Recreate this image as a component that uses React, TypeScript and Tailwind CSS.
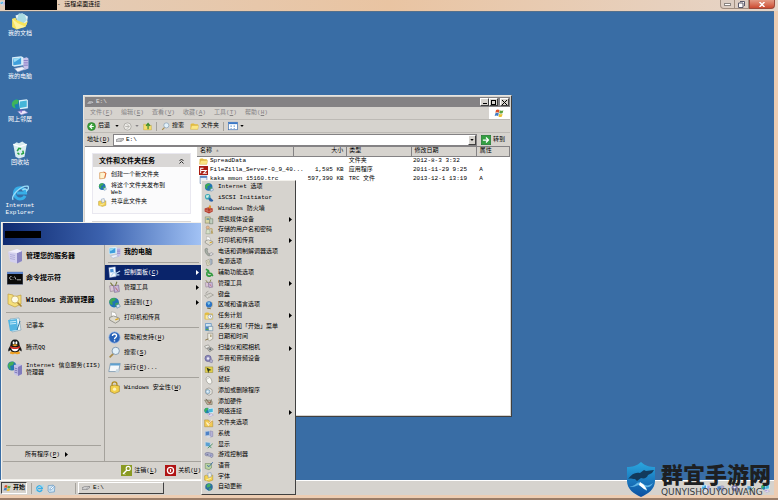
import React from 'react';

type IconProps = { className?: string };

const Svg = ({ className = 'size-[10px]', children }: { className?: string; children: React.ReactNode }) => (
  <svg viewBox="0 0 16 16" className={`shrink-0 ${className}`} aria-hidden="true">
    {children}
  </svg>
);

const DocsIcon = ({ className }: IconProps) => (
  <Svg className={className}>
    <path d="M4 3l6-2 5 3-1 7-7 2z" fill="#e6f3f6" />
    <path d="M7 1l5 1 2 5-4 4-5-3z" fill="#a9dbe2" />
    <path d="M1 6l3-1 1 2 7 3 3-2-2 5-8 2.500-4-2z" fill="#f6e45c" />
    <path d="M1 6l4 9 8-2-7-3z" fill="#fbf2a0" />
  </Svg>
);

const ComputerIcon = ({ className }: IconProps) => (
  <Svg className={className}>
    <path d="M10 3l4-1 1.500 1v9l-4 1.500z" fill="#c9c2ea" />
    <path d="M11 5h4M11 7h4M11 9h4" stroke="#7c72bd" strokeWidth=".8" />
    <path d="M1 2l8-1 2 1v7l-8 1.500-2-1z" fill="#d7edf9" />
    <path d="M2 3.200l7-.8v5.800l-7 1z" fill="#3f9fdc" />
    <path d="M2 3.200l7-.8-6 4z" fill="#9adcf5" />
    <path d="M3 12l7-1.500 3 2-7 2.500z" fill="#eef2fa" stroke="#8b9cc6" strokeWidth=".5" />
  </Svg>
);

const NetPlacesIcon = ({ className }: IconProps) => (
  <Svg className={className}>
    <circle cx="5" cy="5.500" r="4.500" fill="#1c7fb4" />
    <path d="M1 4c2-3 4-3 6-2L6 5 3 6l1 3c-2 0-4-2-3-5z" fill="#3fb45a" />
    <path d="M7 2l7-1 1 1v7l-7 1z" fill="#d9f1fb" />
    <path d="M8 3l6-.8v5.600l-6 1z" fill="#45b5d8" />
    <path d="M6 12l6-1 3 2-6 2z" fill="#eee8fa" stroke="#7c78c8" strokeWidth=".5" />
    <path d="M9 10v3" stroke="#7e58c0" />
  </Svg>
);

const RecycleIcon = ({ className }: IconProps) => (
  <Svg className={className}>
    <path d="M2 3l3-2 2 1 3-1.500 4 2.500-2 11-5 1.500-3-1.500z" fill="#d9ecf0" />
    <path d="M2 3l6 2 6-2" stroke="#ffffff" strokeWidth="1.200" fill="none" />
    <path d="M5.500 9l1.500-2.500 2 .5M10.500 8.500l.5 2.500-2 .8M7.500 12L5.800 10.500" stroke="#27a243" strokeWidth="1.400" fill="none" />
  </Svg>
);

const IeIcon = ({ className }: IconProps) => (
  <Svg className={className}>
    <path d="M12.500 10.500A5 5 0 1 1 13 8H5" fill="none" stroke="#37aee8" strokeWidth="2.600" />
    <path d="M2 14C-1 11 9 1 15 2c1 1 0 3-1 4 0-2-2-2-4-.5" fill="none" stroke="#9bdcf8" strokeWidth="1.200" />
  </Svg>
);

const GlobeIcon = ({ className }: IconProps) => (
  <Svg className={className}>
    <circle cx="7.500" cy="8" r="6" fill="#2174b4" />
    <path d="M3 4c2-2 5-2 7-1L8 6 5 7l1 3-2 1C1 9 1 6 3 4zM9 9l4-1c0 3-2 5-4 5z" fill="#3fa955" />
    <path d="M10 11l4-1 1 3-4 2z" fill="#d5e6f5" stroke="#3c6e9c" strokeWidth=".6" />
  </Svg>
);

const IscsiIcon = ({ className }: IconProps) => (
  <Svg className={className}>
    <circle cx="6" cy="6" r="4.500" fill="#3ca7b6" />
    <path d="M3 4l5-1-1 4-3 1z" fill="#d7f1e5" />
    <path d="M7 9l3-2 5 5-2 2-4-1z" fill="#2a62a8" />
  </Svg>
);

const FirewallIcon = ({ className }: IconProps) => (
  <Svg className={className}>
    <path d="M1 7l6-2 7 2v5l-6 3-7-3z" fill="#b3392b" />
    <path d="M1 9.500l7 2.500 6-2.500M5 6v7M11 7v6" stroke="#e8a08c" strokeWidth=".7" fill="none" />
    <path d="M8 7c-2-3 1-3 1-6 3 2 3 4 1 6z" fill="#e2922c" />
  </Svg>
);

const ToolsIcon = ({ className }: IconProps) => (
  <Svg className={className}>
    <path d="M2 6l5-1 1 7-5 1z" fill="#d9c4d6" stroke="#77667a" strokeWidth=".6" />
    <path d="M7 6l6-1 1 8-6 1z" fill="#c8b5d8" stroke="#5d4a78" strokeWidth=".6" />
    <path d="M3 2l3 4M11 1L9 6" stroke="#7a7a40" strokeWidth="1.300" />
    <path d="M9 8l3 4" stroke="#b35a52" />
  </Svg>
);

const DevicesIcon = ({ className }: IconProps) => (
  <Svg className={className}>
    <path d="M2 3h8v10H2z" fill="#d8d6a4" stroke="#747450" strokeWidth=".8" />
    <path d="M4 5h4v3H4z" fill="#6e9a9d" />
    <path d="M9 6h5v8H9z" fill="#c1cfc0" stroke="#62705f" strokeWidth=".8" />
  </Svg>
);

const UsersIcon = ({ className }: IconProps) => (
  <Svg className={className}>
    <circle cx="6" cy="4" r="2.500" fill="#e7b98f" stroke="#8a623f" strokeWidth=".5" />
    <path d="M3 14l1-7h5l1 7z" fill="#d6e0c9" stroke="#6f7e62" strokeWidth=".6" />
    <path d="M9 6h4v3l1 5M12 9v5" stroke="#a88a31" fill="none" />
  </Svg>
);

const PrinterIcon = ({ className }: IconProps) => (
  <Svg className={className}>
    <path d="M4 1l5 1 2 5-6 1z" fill="#fff" stroke="#93938a" strokeWidth=".6" />
    <path d="M2 8l5-2 7 3v3l-5 3-7-4z" fill="#dedbd0" stroke="#66665e" strokeWidth=".7" />
    <path d="M9 11l4-1.500" stroke="#d9a520" strokeWidth="1.600" />
  </Svg>
);

const PhoneIcon = ({ className }: IconProps) => (
  <Svg className={className}>
    <path d="M2 3c3-2 5 0 3 3l2 5c4 0 4 2 2 3-4 1-9-7-7-11z" fill="#aab0a8" stroke="#5e645e" strokeWidth=".7" />
    <path d="M8 11l4-2 3 2-4 3z" fill="#dddde0" stroke="#70707a" strokeWidth=".7" />
  </Svg>
);

const PowerPlanIcon = ({ className }: IconProps) => (
  <Svg className={className}>
    <path d="M3 6l5-2 2 8-5 2z" fill="#e6e4c8" stroke="#7c7a62" strokeWidth=".7" />
    <path d="M9 3l4 1v7l-3 2" fill="#aab6c3" stroke="#56616e" strokeWidth=".6" />
    <path d="M5 8l2-.6M6 10l2-.6" stroke="#7a7a7a" />
  </Svg>
);

const AccessIcon = ({ className }: IconProps) => (
  <Svg className={className}>
    <path d="M3 2l4 2 1 4 4 1 2 4M7 5C3 7 4 13 8 13c2 0 3-1 3-2" stroke="#2f9a3e" strokeWidth="2.600" fill="none" />
  </Svg>
);

const KeyboardIcon = ({ className }: IconProps) => (
  <Svg className={className}>
    <path d="M1 9l9-4 5 3-9 5z" fill="#e8e6de" stroke="#66665e" strokeWidth=".7" />
    <path d="M4 9.500l7-3M6 11l7-3.500" stroke="#8d8d86" strokeDasharray="1 .8" />
    <path d="M3 6c0-3 3-3 4-4" stroke="#707068" fill="none" strokeWidth=".8" />
  </Svg>
);

const RegionIcon = ({ className }: IconProps) => (
  <Svg className={className}>
    <circle cx="8" cy="7" r="5" fill="#2c74c4" />
    <path d="M5 4l4-1 1 3-3 2z" fill="#81c6ea" />
    <path d="M5 13l6 1" stroke="#6d6242" strokeWidth="1.500" />
    <path d="M12 3c3 3 2 8-2 10" fill="none" stroke="#a09060" strokeWidth=".8" />
  </Svg>
);

const FolderIcon = ({ className }: IconProps) => (
  <Svg className={className}>
    <path d="M1 4l2-1.500h4L8.500 4H14v9H1z" fill="#e3bc3f" />
    <path d="M1 13l2-7h12.500L14 13z" fill="#fbe683" stroke="#c59a2b" strokeWidth=".5" />
  </Svg>
);

const FolderClockIcon = ({ className }: IconProps) => (
  <Svg className={className}>
    <path d="M1 4l2-1.500h4L8.500 4H14v9H1z" fill="#e3bc3f" />
    <path d="M2 6h12v7H2z" fill="#fbeaa0" stroke="#c59a2b" strokeWidth=".5" />
    <circle cx="10" cy="9" r="3.600" fill="#fff" stroke="#6b84b2" strokeWidth=".8" />
    <path d="M10 7v2l1.500 1" stroke="#333" strokeWidth=".8" fill="none" />
  </Svg>
);

const TaskbarIcon = ({ className }: IconProps) => (
  <Svg className={className}>
    <path d="M2 2h10v12H2z" fill="#4c88c2" />
    <path d="M3 3h8v4H3z" fill="#cfe4f3" />
    <path d="M7 7h7v7H7z" fill="#e9efe9" stroke="#3c648c" strokeWidth=".7" />
    <path d="M3 11h4v2H3z" fill="#53a94a" />
  </Svg>
);

const ClockIcon = ({ className }: IconProps) => (
  <Svg className={className}>
    <path d="M6 2h8v9l-5 3-3-2z" fill="#eeece2" stroke="#7a776a" strokeWidth=".8" />
    <path d="M2 13l5-2M11 4v4" stroke="#8b7443" strokeWidth="1.500" />
  </Svg>
);

const CameraIcon = ({ className }: IconProps) => (
  <Svg className={className}>
    <path d="M1 5l6-2 2 3-6 3z" fill="#e9e9e6" stroke="#66665e" strokeWidth=".7" />
    <path d="M5 9l6-2 4 3-6 4z" fill="#bfc0bc" stroke="#565650" strokeWidth=".7" />
    <circle cx="10" cy="10" r="1.700" fill="#52616b" />
  </Svg>
);

const SoundIcon = ({ className }: IconProps) => (
  <Svg className={className}>
    <circle cx="6.500" cy="7" r="5" fill="#8e8bbb" stroke="#4b4880" strokeWidth=".8" />
    <circle cx="6.500" cy="7" r="2" fill="#ecebf6" />
    <path d="M10 8l4 2-1 4-4-1z" fill="#b5b3d0" stroke="#57547f" strokeWidth=".6" />
  </Svg>
);

const LicenseIcon = ({ className }: IconProps) => (
  <Svg className={className}>
    <path d="M2 3h12v9H2z" fill="#e3d04b" stroke="#7b6d1c" strokeWidth=".6" />
    <path d="M4 4l8 4-4 1-1 4z" fill="#2d3a1e" />
  </Svg>
);

const MouseIcon = ({ className }: IconProps) => (
  <Svg className={className}>
    <path d="M4 4c3-3 6-1 8 4s-1 7-4 6S2 7 4 4z" fill="#fafaf6" stroke="#77776e" strokeWidth=".8" />
    <path d="M4 7l5-3" stroke="#99998e" strokeWidth=".8" />
  </Svg>
);

const AddRemoveIcon = ({ className }: IconProps) => (
  <Svg className={className}>
    <path d="M3 5l5-2 5 3v6l-5 3-5-3z" fill="#e8e6e0" stroke="#74716a" strokeWidth=".8" />
    <circle cx="6" cy="9" r="3.500" fill="#bcd8ea" stroke="#4d7896" strokeWidth=".7" />
    <circle cx="6" cy="9" r="1" fill="#fff" />
  </Svg>
);

const HardwareIcon = ({ className }: IconProps) => (
  <Svg className={className}>
    <path d="M1 5h9l3 2v5H5z" fill="#b9b49e" stroke="#5a573f" strokeWidth=".7" />
    <path d="M3 3l4 5M12 4l-3 7" stroke="#6a5741" strokeWidth="1.200" />
    <path d="M6 9h5" stroke="#a04538" />
  </Svg>
);

const FolderOptIcon = ({ className }: IconProps) => (
  <Svg className={className}>
    <path d="M1 3h6l1 2h6v9H1z" fill="#f2ca55" stroke="#a8811f" strokeWidth=".7" />
    <path d="M4 7l3 4 6-8" stroke="#fff8cf" strokeWidth="2" fill="none" />
    <path d="M8 10l5-6" stroke="#c96f29" />
  </Svg>
);

const SystemIcon = ({ className }: IconProps) => (
  <Svg className={className}>
    <path d="M2 4l7-1v7l-7 1z" fill="#4f82c5" stroke="#c4d5ea" />
    <path d="M10 3l4 1v8l-4 1z" fill="#b5b2d8" stroke="#6c689c" strokeWidth=".6" />
    <path d="M4 12l6-1 1 2-6 1z" fill="#d5dbe8" />
  </Svg>
);

const DisplayIcon = ({ className }: IconProps) => (
  <Svg className={className}>
    <path d="M2 3l8 1v7l-8-1z" fill="#5aa0d2" stroke="#d1e0ea" />
    <path d="M6 13L14 6M8 9l4 4" stroke="#3c8b58" strokeWidth="1.300" />
  </Svg>
);

const GameIcon = ({ className }: IconProps) => (
  <Svg className={className}>
    <path d="M2 5c3-2 9 0 12 1 1 3 0 6-2 6l-3-2-4-1c-2 1-4-1-3-4z" fill="#b3b5cf" stroke="#565a85" strokeWidth=".8" />
    <circle cx="11" cy="8" r="1" fill="#5159a8" />
    <path d="M4 7h3" stroke="#474c75" />
  </Svg>
);

const SpeechIcon = ({ className }: IconProps) => (
  <Svg className={className}>
    <path d="M2 4h10v7l-4 3-6-2z" fill="#b9d3a2" stroke="#567447" strokeWidth=".7" />
    <path d="M14 2L8 9 5 7" stroke="#3f6ea8" strokeWidth="1.600" fill="none" />
  </Svg>
);

const FontsIcon = ({ className }: IconProps) => (
  <Svg className={className}>
    <path d="M1 6l3-1 2 1 8-1v8l-6 2-7-2z" fill="#f3d251" stroke="#a4861f" strokeWidth=".7" />
    <path d="M6 2l5-1 1 6-5 2z" fill="#f3f1e2" stroke="#6c88c0" strokeWidth=".8" />
    <path d="M3 13l8-3" stroke="#fbf0b4" strokeWidth="1.500" />
  </Svg>
);

const UpdateIcon = ({ className }: IconProps) => (
  <Svg className={className}>
    <circle cx="8" cy="8" r="6" fill="#2c6f9f" />
    <path d="M4 5l4-3 3 3-2 3-4 1zM8 10l4 0-3 4z" fill="#48b062" />
    <path d="M3 12l3 2" stroke="#d3e7f0" strokeWidth="1.500" />
  </Svg>
);

const ServerIcon = ({ className }: IconProps) => (
  <Svg className={className}>
    <path d="M1 4l9-3 5 2v10l-5 2.500-7-2z" fill="#d3d0ee" />
    <path d="M10 5l5-2v10l-5 2.500z" fill="#8985c3" />
    <path d="M3 6.500l5 1M3 8.500l5 1M3 10.500l5 1" stroke="#a9a6d6" strokeWidth=".8" />
    <path d="M1 4l9-3 5 2-5 2z" fill="#f1effb" />
  </Svg>
);

const CmdIcon = ({ className }: IconProps) => (
  <Svg className={className}>
    <rect x="0" y="2" width="16" height="12.500" fill="#0a0a0a" stroke="#8a98b4" strokeWidth=".6" />
    <rect x="0" y="2" width="16" height="2" fill="#5b82c8" />
    <path d="M4.500 6.500C2 6 2 10 4.500 9.500M6 7v.5M6 9v.5M7.500 6.500l1.500 3M10 9.800h4" stroke="#d8d8d8" strokeWidth=".8" fill="none" />
  </Svg>
);

const ExplorerIcon = ({ className }: IconProps) => (
  <Svg className={className}>
    <path d="M1 2l5 1 1 2 7-2v9l-6 3-7-3z" fill="#f5df7a" stroke="#b9962f" strokeWidth=".6" />
    <circle cx="8" cy="7.500" r="3.600" fill="#fdfbea" stroke="#cfb669" />
    <path d="M10.500 10.500l4 4" stroke="#a98434" strokeWidth="1.600" />
  </Svg>
);

const NotepadIcon = ({ className }: IconProps) => (
  <Svg className={className}>
    <path d="M3 2l9-1 2 12-9 2z" fill="#e9f7fc" stroke="#5c8ca8" strokeWidth=".5" />
    <path d="M1 3l9-1 1 11-8 1z" fill="#52b5e2" />
    <path d="M3 5l6-.6M3 7l6-.6" stroke="#c7ecfa" />
    <path d="M13 4l-3 9" stroke="#3a7fa6" />
  </Svg>
);

const QqIcon = ({ className }: IconProps) => (
  <Svg className={className}>
    <path d="M3 14c0-2 4-2 5-1 1-1 5-1 5 1 0 1.500-4 1.500-5 .5-1 1-5 1-5-.5z" fill="#f0a020" />
    <path d="M8 .5c3 0 4.500 2 4.500 5 0 2 3 4 2 7l-2-1.500C12 14 4 14 3.500 11l-2 1.500c-1-3 2-5 2-7 0-3 1.500-5 4.500-5z" fill="#171717" />
    <path d="M4.500 8.500h7c1 5-8 5-7 0z" fill="#fff" />
    <path d="M3.500 7c3 2 6 2 9 0l.5 1.500c-3 2-7 2-10 0z" fill="#d8261c" />
    <ellipse cx="6.600" cy="3.800" rx="1" ry="1.500" fill="#fff" />
    <ellipse cx="9.400" cy="3.800" rx="1" ry="1.500" fill="#fff" />
    <path d="M5 6c2-1 4-1 6 0-2 1.500-4 1.500-6 0z" fill="#f0a020" />
  </Svg>
);

const IisIcon = ({ className }: IconProps) => (
  <Svg className={className}>
    <circle cx="5" cy="5" r="4.500" fill="#2678b0" />
    <path d="M1 4c1-3 4-4 6-3L6 4 3 5l1 4C2 8 1 6 1 4z" fill="#45ae57" />
    <path d="M7 4l5-1 3 1v9l-4 2-4-2z" fill="#c5c1e8" />
    <path d="M11 6l4-2v9l-4 2z" fill="#807bbd" />
    <path d="M7.500 7l3 1M7.500 9l3 1M7.500 11l3 1" stroke="#6965a6" strokeWidth=".8" />
  </Svg>
);

const ControlPanelIcon = ({ className }: IconProps) => (
  <Svg className={className}>
    <path d="M1 2l8-1 1 12-8 1z" fill="#f4f8fd" stroke="#88a3cf" strokeWidth=".6" />
    <path d="M2.500 4l4-.5.5 4-4 .5z" fill="#4f94d8" />
    <path d="M4 12l3-4 3 1 5-3M9 11h5" stroke="#b9d9f2" strokeWidth="1.400" fill="none" />
  </Svg>
);

const HelpIcon = ({ className }: IconProps) => (
  <Svg className={className}>
    <circle cx="8" cy="8" r="7" fill="#2762b8" stroke="#a9c2e8" />
    <path d="M5.500 6C5.500 3 10.500 3 10.500 6c0 2-2.500 2-2.500 4M8 11.500v1.500" stroke="#fff" strokeWidth="1.700" fill="none" />
  </Svg>
);

const SearchIcon = ({ className }: IconProps) => (
  <Svg className={className}>
    <path d="M7 9l-5 5" stroke="#a98b4a" strokeWidth="2" />
    <circle cx="9.500" cy="6" r="4.500" fill="#e2f1fa" stroke="#7b93ac" strokeWidth="1.100" />
  </Svg>
);

const RunIcon = ({ className }: IconProps) => (
  <Svg className={className}>
    <path d="M3 3h12l-2 10H1z" fill="#f5f8fa" stroke="#5f83a3" strokeWidth=".8" />
    <path d="M3 3h12l-.5 2.500h-12z" fill="#5fa0cf" />
    <path d="M10 10h4l-1 4H9z" fill="#c7d6df" />
  </Svg>
);

const ShowDesktopIcon = ({ className }: IconProps) => (
  <Svg className={className}>
    <path d="M2 3l9-1 3 3-1 9-9 1-2-3z" fill="#cfe6f5" stroke="#4a86bc" />
    <path d="M5 11l1-3 5-5 2 2-5 5z" fill="#fff" stroke="#3b78b4" strokeWidth=".9" />
  </Svg>
);

const LockIcon = ({ className }: IconProps) => (
  <Svg className={className}>
    <path d="M5 7V4c0-4 6-4 6 0v3" stroke="#b08c22" strokeWidth="1.600" fill="none" />
    <path d="M3 6l5-1 6 1v7l-6 2.500L3 13z" fill="#f2cf4a" stroke="#96761b" strokeWidth=".7" />
    <circle cx="8" cy="10" r="2" fill="#fdf3bd" />
  </Svg>
);

const LogoffIcon = ({ className }: IconProps) => (
  <Svg className={className}>
    <rect width="16" height="16" fill="#8a9a22" />
    <path d="M3 13l6-6" stroke="#fff" strokeWidth="2" />
    <path d="M4 12l2 2" stroke="#fff" strokeWidth="1.200" />
    <circle cx="10.500" cy="5" r="3" fill="none" stroke="#fff" strokeWidth="1.600" />
  </Svg>
);

const ShutdownIcon = ({ className }: IconProps) => (
  <Svg className={className}>
    <rect width="16" height="16" fill="#b01414" />
    <circle cx="8" cy="8" r="4.500" fill="none" stroke="#fff" strokeWidth="1.800" />
    <path d="M8 6v4" stroke="#fff" strokeWidth="1.800" />
  </Svg>
);

const FlagIcon = ({ className }: IconProps) => (
  <Svg className={className}>
    <path d="M3 3c2-1 3-1 5 0l-1 4C5 6 4 6 2 7z" fill="#d9502c" />
    <path d="M8.600 3.300c2 1 3 1 5 0l-1 4c-2 1-3 1-5 0z" fill="#5da33c" />
    <path d="M2 7.800c2-1 3-1 5 0l-1 4c-2-1-3-1-5 0z" fill="#3f7cc4" />
    <path d="M7.500 8.200c2 1 3 1 5 0l-1 4c-2 1-3 1-5 0z" fill="#e9bf34" />
  </Svg>
);

const DriveIcon = ({ className }: IconProps) => (
  <Svg className={className}>
    <path d="M0 8l5-3h10v3l-5 3H0z" fill="#e9e9e9" stroke="#55555a" strokeWidth=".9" />
    <path d="M0 8h10l5-3M10 8v3" stroke="#55555a" strokeWidth=".8" fill="none" />
  </Svg>
);

const BackIcon = ({ className }: IconProps) => (
  <Svg className={className}>
    <circle cx="8" cy="8" r="7" fill="#3aa33a" stroke="#247024" />
    <path d="M9 4L5 8l4 4M5 8h7" stroke="#fff" strokeWidth="2" fill="none" />
  </Svg>
);

const ForwardIcon = ({ className }: IconProps) => (
  <Svg className={className}>
    <circle cx="8" cy="8" r="6.500" fill="#eceae6" stroke="#8f8d88" />
    <path d="M7 4l4 4-4 4M4 8h7" stroke="#b4b2ad" strokeWidth="1.600" fill="none" />
  </Svg>
);

const UpIcon = ({ className }: IconProps) => (
  <Svg className={className}>
    <path d="M1 4h5l1 2h8v8H1z" fill="#f4dc6b" stroke="#b39737" strokeWidth=".6" />
    <path d="M9 13V4M5.500 7L9 2.500 12.500 7" stroke="#3c8f2c" strokeWidth="2.200" fill="none" />
  </Svg>
);

const ViewsIcon = ({ className }: IconProps) => (
  <Svg className={className}>
    <rect x="1" y="2" width="14" height="12" fill="#fff" stroke="#2f65ad" />
    <rect x="1" y="2" width="14" height="3" fill="#3a78c8" />
    <path d="M4 7h2v2H4zM9 7h2v2H9zM4 11h2v1.500H4zM9 11h2v1.500H9z" fill="#5c93cf" />
  </Svg>
);

const GoIcon = ({ className }: IconProps) => (
  <Svg className={className}>
    <rect x=".5" y=".5" width="15" height="15" fill="#35a042" stroke="#1f7430" />
    <path d="M3 8h8M8 4l4 4-4 4" stroke="#fff" strokeWidth="2" fill="none" />
  </Svg>
);

const NewFolderIcon = ({ className }: IconProps) => (
  <Svg className={className}>
    <path d="M3 3l9-1 2 2-2 9-9 1z" fill="#fff3cf" stroke="#c97b2d" />
    <path d="M10 2l4 2-2 8" stroke="#df5f28" strokeWidth="1.500" fill="none" />
  </Svg>
);

const FileZillaIcon = ({ className }: IconProps) => (
  <Svg className={className}>
    <rect width="16" height="16" fill="#a81d12" />
    <path d="M3 13V4h5M3 8h4M7 8h6l-5 5h6" stroke="#fff" strokeWidth="1.800" fill="none" />
  </Svg>
);

const TraceIcon = ({ className }: IconProps) => (
  <Svg className={className}>
    <path d="M2 2h12v10H6v3H2z" fill="#e9f0f8" stroke="#456a9e" />
    <path d="M2 2h12v3H2z" fill="#4b7dbd" />
  </Svg>
);

const ShieldLogo = () => (
  <svg viewBox="0 0 30 35" className="h-[35px] w-[30px] shrink-0" aria-hidden="true">
    <defs>
      <linearGradient id="shield" x1="0" y1="0" x2="0" y2="1">
        <stop offset="0" stopColor="#2ba8e0" />
        <stop offset="1" stopColor="#0b4fa0" />
      </linearGradient>
    </defs>
    <path d="M15 0c4 4 9 5 14 5v14c0 8-7 13-14 16C8 32 1 27 1 19V5c5 0 10-1 14-5z" fill="url(#shield)" />
    <path d="M2 17c4-5 7-7 12-6l4-3 2 1 8-1-2 3-4 2c-1 3-4 4-7 3l-4 3-2-2c-3 0-5-1-7 0z" fill="#123a5c" />
    <path d="M3 24c3 1 6-1 8-3 3-1 5 0 8 2 3 1 5 0 8-2-2 4-5 5-7 4l1 4c-3-1-5-5-8-6-4 1-6 3-10 1z" fill="#5fb4e6" />
    <path d="M14 20l4 3 3 5-3-1-5-4z" fill="#fff" />
  </svg>
);

type MenuEntry = { label: string; icon: React.FC<IconProps>; more?: boolean };

const desktopIcons: MenuEntry[] = [
  { label: '我的文档', icon: DocsIcon },
  { label: '我的电脑', icon: ComputerIcon },
  { label: '网上邻居', icon: NetPlacesIcon },
  { label: '回收站', icon: RecycleIcon },
  { label: 'Internet Explorer', icon: IeIcon },
];

const controlPanel: MenuEntry[] = [
  { label: 'Internet 选项', icon: GlobeIcon },
  { label: 'iSCSI Initiator', icon: IscsiIcon },
  { label: 'Windows 防火墙', icon: FirewallIcon },
  { label: '便携媒体设备', icon: DevicesIcon, more: true },
  { label: '存储的用户名和密码', icon: UsersIcon },
  { label: '打印机和传真', icon: PrinterIcon, more: true },
  { label: '电话和调制解调器选项', icon: PhoneIcon },
  { label: '电源选项', icon: PowerPlanIcon },
  { label: '辅助功能选项', icon: AccessIcon },
  { label: '管理工具', icon: ToolsIcon, more: true },
  { label: '键盘', icon: KeyboardIcon },
  { label: '区域和语言选项', icon: RegionIcon },
  { label: '任务计划', icon: FolderClockIcon, more: true },
  { label: '任务栏和「开始」菜单', icon: TaskbarIcon },
  { label: '日期和时间', icon: ClockIcon },
  { label: '扫描仪和照相机', icon: CameraIcon, more: true },
  { label: '声音和音频设备', icon: SoundIcon },
  { label: '授权', icon: LicenseIcon },
  { label: '鼠标', icon: MouseIcon },
  { label: '添加或删除程序', icon: AddRemoveIcon },
  { label: '添加硬件', icon: HardwareIcon },
  { label: '网络连接', icon: NetPlacesIcon, more: true },
  { label: '文件夹选项', icon: FolderOptIcon },
  { label: '系统', icon: SystemIcon },
  { label: '显示', icon: DisplayIcon },
  { label: '游戏控制器', icon: GameIcon },
  { label: '语音', icon: SpeechIcon },
  { label: '字体', icon: FontsIcon },
  { label: '自动更新', icon: UpdateIcon },
];

const files = [
  { name: 'SpreadData', icon: FolderIcon, size: '', type: '文件夹', date: '2012-8-3 3:32', attr: '' },
  { name: 'FileZilla_Server-0_9_40...', icon: FileZillaIcon, size: '1,585 KB', type: '应用程序', date: '2011-11-29 9:25', attr: 'A' },
  { name: 'kaka_mmon_15160.trc', icon: TraceIcon, size: '597,390 KB', type: 'TRC 文件', date: '2013-12-1 13:19', attr: 'A' },
];

const Arrow = () => (
  <svg viewBox="0 0 3 5" className="h-[5px] w-[3px] shrink-0" aria-hidden="true">
    <path d="M0 0l3 2.500L0 5z" fill="currentColor" />
  </svg>
);

const Down = () => (
  <svg viewBox="0 0 5 3" className="h-[2px] w-[4px] shrink-0" aria-hidden="true">
    <path d="M0 0h5L2.500 3z" fill="currentColor" />
  </svg>
);

// Menu label with an underlined access key, e.g. 文件(F)
const Key = ({ text, k }: { text: string; k: string }) => (
  <span>
    {text}(<u>{k}</u>)
  </span>
);

const StartItem = ({ icon: Icon, children, more, active }: { icon: React.FC<IconProps>; children: React.ReactNode; more?: boolean; active?: boolean }) => (
  <button
    role="menuitem"
    className={`flex h-[15px] w-full items-center gap-[3px] pr-[3px] pl-[3px] text-left ${active ? 'bg-[#0a246a] text-white' : ''}`}
  >
    <Icon className="size-[13px]" />
    <span className="flex-1">{children}</span>
    {more && <Arrow />}
  </button>
);

const Divider = ({ className = 'my-[2px]' }: { className?: string }) => (
  <div className={`mx-[3px] h-px shrink-0 bg-[#a5a29c] ${className}`} />
);

const ExplorerWindow = () => (
  <section className="absolute top-[83px] left-[83px] flex h-[322px] w-[429px] flex-col border border-[#e7e5e0] border-r-[#404040] border-b-[#404040] bg-[#d6d3ce] p-px">
    <header className="flex h-[10px] shrink-0 items-center gap-[2px] bg-[#848284] pl-[2px] text-[#e7e5e0]">
      <DriveIcon className="size-[7px]" />
      <h1 className="flex-1">E:\</h1>
      <button aria-label="最小化" className="flex h-2 w-[9px] items-end justify-center border border-white border-r-[#404040] border-b-[#404040] bg-[#d6d3ce] pb-px">
        <span className="h-px w-[4px] bg-black" />
      </button>
      <button aria-label="最大化" className="-ml-[2px] flex h-2 w-[9px] items-center justify-center border border-white border-r-[#404040] border-b-[#404040] bg-[#d6d3ce]">
        <span className="h-[5px] w-[5px] border border-black" />
      </button>
      <button aria-label="关闭" className="mr-px flex h-2 w-[9px] items-center justify-center border border-white border-r-[#404040] border-b-[#404040] bg-[#d6d3ce]">
        <svg viewBox="0 0 5 5" className="size-[5px]">
          <path d="M0 0l5 5M5 0L0 5" stroke="#000" />
        </svg>
      </button>
    </header>

    {/* Menu bar */}
    <nav className="flex h-[13px] shrink-0 items-center gap-[9px] border-b border-[#bdbab5] pl-[5px] text-[#848284]">
      <button className="w-[22px] whitespace-nowrap"><Key text="文件" k="F" /></button>
      <button className="w-[22px] whitespace-nowrap"><Key text="编辑" k="E" /></button>
      <button className="w-[22px] whitespace-nowrap"><Key text="查看" k="V" /></button>
      <button className="w-[22px] whitespace-nowrap"><Key text="收藏" k="A" /></button>
      <button className="w-[22px] whitespace-nowrap"><Key text="工具" k="T" /></button>
      <button className="w-[22px] whitespace-nowrap"><Key text="帮助" k="H" /></button>
      <span className="ml-auto flex h-full w-[21px] items-center justify-center bg-white">
        <FlagIcon className="size-[11px]" />
      </span>
    </nav>

    {/* Toolbar */}
    <div className="flex h-[13px] shrink-0 items-center border-b border-[#bdbab5] pl-[2px]">
      <button className="flex items-center gap-[2px]">
        <BackIcon className="size-[9px]" />
        后退
      </button>
      <span className="ml-[5px]"><Down /></span>
      <button aria-label="前进" className="ml-[4px]"><ForwardIcon className="size-[9px]" /></button>
      <span className="ml-[3px] text-[#848284]"><Down /></span>
      <button aria-label="向上" className="ml-[4px]"><UpIcon className="size-[9px]" /></button>
      <span className="mx-[4px] h-[9px] w-px bg-[#a5a29c]" />
      <button className="flex items-center gap-[2px]">
        <SearchIcon className="size-[9px]" />
        搜索
      </button>
      <button className="ml-[6px] flex items-center gap-[2px]">
        <FolderIcon className="size-[9px]" />
        文件夹
      </button>
      <span className="mx-[4px] h-[9px] w-px bg-[#a5a29c]" />
      <button aria-label="查看方式" className="flex items-center gap-[2px]">
        <ViewsIcon className="size-[10px]" />
        <Down />
      </button>
    </div>

    {/* Address bar */}
    <div className="flex h-[13px] shrink-0 items-center pl-[2px]">
      <label htmlFor="address" className="w-[26px] whitespace-nowrap"><Key text="地址" k="D" /></label>
      <div className="flex h-[12px] flex-1 items-center border border-[#848284] bg-white pl-[2px]">
        <DriveIcon className="size-[8px]" />
        <input id="address" defaultValue="E:\" className="h-[10px] min-w-0 flex-1 bg-transparent pl-[2px] outline-none" />
        <button aria-label="展开" className="flex h-[10px] w-[8px] items-center justify-center border border-white border-r-[#404040] border-b-[#404040] bg-[#d6d3ce]">
          <Down />
        </button>
      </div>
      <button className="mr-[5px] ml-[4px] flex items-center gap-[2px]">
        <GoIcon className="size-[10px]" />
        转到
      </button>
    </div>

    <div className="flex min-h-0 flex-1 border-t border-[#848284] bg-white">
      <aside className="w-[112px] shrink-0 overflow-hidden pt-[6px] pr-[6px] pl-[7px]">
        <section className="border border-[#e9e8f0] bg-[#fbfbfc]">
          <h2 className="flex h-[13px] items-center justify-between bg-[#d9d7d6] px-[6px] text-[7px] font-bold">
            文件和文件夹任务
            <svg viewBox="0 0 5 6" className="h-[6px] w-[5px]" aria-hidden="true">
              <path d="M.5 3l2-2 2 2M.5 5.500l2-2 2 2" stroke="#000" fill="none" strokeWidth=".8" />
            </svg>
          </h2>
          <ul className="flex h-[46px] flex-col gap-[2px] pt-[4px] pl-[5px] leading-[7px]">
            <li><a href="#new" className="flex gap-[4px]"><NewFolderIcon className="size-[9px]" />创建一个新文件夹</a></li>
            <li><a href="#web" className="flex gap-[4px]"><GlobeIcon className="size-[9px]" /><span>将这个文件夹发布到<br />Web</span></a></li>
            <li><a href="#share" className="flex gap-[4px]"><FontsIcon className="size-[9px]" />共享此文件夹</a></li>
          </ul>
        </section>
        <div className="mt-[7px] h-[13px] bg-[#d9d7d6]" />
      </aside>

      <div className="min-w-0 flex-1">
        <table className="w-full table-fixed border-collapse whitespace-nowrap">
          <colgroup>
            <col className="w-[96px]" />
            <col className="w-[53px]" />
            <col className="w-[64px]" />
            <col className="w-[65px]" />
            <col className="w-[33px]" />
          </colgroup>
          <thead>
            <tr className="h-[9px] bg-[#d6d3ce] text-left">
              <th className="border-r border-b border-[#848284] p-0 pl-[3px] font-normal">名称 <span className="text-[#848284]">▴</span></th>
              <th className="border-r border-b border-[#848284] p-0 pr-[3px] text-right font-normal">大小</th>
              <th className="border-r border-b border-[#848284] p-0 pl-[2px] font-normal">类型</th>
              <th className="border-r border-b border-[#848284] p-0 pl-[3px] font-normal">修改日期</th>
              <th className="border-r border-b border-[#848284] p-0 pl-[3px] font-normal">属性</th>
            </tr>
          </thead>
          <tbody>
            {files.map(({ name, icon: Icon, size, type, date, attr }) => (
              <tr key={name} className="h-[9px]">
                <td className="p-0">
                  <span className="flex items-center gap-[2px] pl-[2px]">
                    <Icon className="size-[9px]" />
                    {name}
                  </span>
                </td>
                <td className="p-0 pr-[3px] text-right">{size}</td>
                <td className="p-0 pl-[2px]">{type}</td>
                <td className="p-0 pl-[2px]">{date}</td>
                <td className="p-0 pl-[3px]">{attr}</td>
              </tr>
            ))}
          </tbody>
        </table>
      </div>
    </div>
  </section>
);

const StartMenu = () => (
  <div role="menu" aria-label="开始" className="absolute bottom-[20px] left-px z-10 flex h-[258px] w-[202px] flex-col border border-[#f3f1ec] border-r-[#404040] bg-[#d6d3ce] pl-px">
    <header className="flex h-[22px] shrink-0 items-center bg-linear-to-r from-[#0f2a70] via-[#3c62ae] to-[#a3c3f5] pl-[2px]">
      <span className="h-[7px] w-[36px] bg-black" />
    </header>

    <div className="flex min-h-0 flex-1">
      <div className="flex w-[102px] flex-col border-r border-[#a5a29c]">
        {[
          { label: '管理您的服务器', icon: ServerIcon },
          { label: '命令提示符', icon: CmdIcon },
          { label: 'Windows 资源管理器', icon: ExplorerIcon },
        ].map(({ label, icon: Icon }) => (
          <button key={label} role="menuitem" className="flex h-[22px] items-center gap-[3px] pl-[4px] text-left text-[7px] font-bold whitespace-nowrap">
            <Icon className="size-[16px]" />
            {label}
          </button>
        ))}
        <Divider className="my-px" />
        {[
          { label: '记事本', icon: NotepadIcon },
          { label: '腾讯QQ', icon: QqIcon },
          { label: 'Internet 信息服务(IIS)管理器', icon: IisIcon },
        ].map(({ label, icon: Icon }) => (
          <button key={label} role="menuitem" className="flex h-[22px] items-center gap-[3px] pl-[4px] text-left leading-[7px]">
            <Icon className="size-[16px]" />
            {label}
          </button>
        ))}
        <div className="mt-auto">
          <Divider />
          <button className="flex h-[13px] items-center gap-[5px] pl-[22px]">
            <Key text="所有程序" k="P" />
            <Arrow />
          </button>
        </div>
      </div>

      <div className="flex-1">
        <StartItem icon={ComputerIcon}><b className="text-[7px]">我的电脑</b></StartItem>
        <Divider />
        <StartItem icon={ControlPanelIcon} more active><Key text="控制面板" k="C" /></StartItem>
        <StartItem icon={ToolsIcon} more>管理工具</StartItem>
        <StartItem icon={GlobeIcon} more><Key text="连接到" k="T" /></StartItem>
        <StartItem icon={PrinterIcon}>打印机和传真</StartItem>
        <Divider />
        <StartItem icon={HelpIcon}><Key text="帮助和支持" k="H" /></StartItem>
        <StartItem icon={SearchIcon}><Key text="搜索" k="S" /></StartItem>
        <StartItem icon={RunIcon}><Key text="运行" k="R" />...</StartItem>
        <Divider />
        <StartItem icon={LockIcon}><Key text="Windows 安全性" k="W" /></StartItem>
      </div>
    </div>

    <footer className="flex h-[18px] shrink-0 items-center justify-end gap-[8px] border-t border-[#a5a29c] pr-px">
      <button className="flex items-center gap-[2px]">
        <LogoffIcon className="size-[11px]" />
        <Key text="注销" k="L" />
      </button>
      <button className="flex items-center gap-[2px]">
        <ShutdownIcon className="size-[11px]" />
        <Key text="关机" k="U" />
      </button>
    </footer>
  </div>
);

const ControlPanelMenu = () => (
  <div role="menu" aria-label="控制面板" className="absolute bottom-[5px] left-[201px] z-20 flex h-[315px] w-[95px] flex-col border border-[#f3f1ec] border-r-[#404040] border-b-[#404040] bg-[#d6d3ce] py-px">
    {controlPanel.map(({ label, icon: Icon, more }) => (
      <button key={label} role="menuitem" className="flex min-h-0 flex-1 items-center gap-[4px] pr-[3px] pl-[2px] text-left whitespace-nowrap">
        <Icon className="size-[10px]" />
        <span className="flex-1">{label}</span>
        {more && <Arrow />}
      </button>
    ))}
  </div>
);

const Taskbar = () => (
  <footer className="flex h-[15px] shrink-0 items-center border-t border-white bg-[#d6d3ce]">
    <button className="ml-px flex h-[12px] w-[26px] items-center gap-px border border-[#404040] border-r-white border-b-white pl-px font-bold">
      <FlagIcon className="size-[9px]" />
      开始
    </button>
    <span className="ml-[4px] h-[11px] w-px bg-[#a5a29c]" />
    <button aria-label="Internet Explorer" className="ml-[3px]"><IeIcon className="size-[9px]" /></button>
    <button aria-label="显示桌面" className="ml-[3px]"><ShowDesktopIcon className="size-[9px]" /></button>
    <span className="ml-[19px] h-[11px] w-px bg-[#a5a29c]" />
    <button className="ml-[2px] flex h-[12px] w-[86px] items-center gap-[3px] border border-white border-r-[#404040] border-b-[#404040] pl-[3px]">
      <DriveIcon className="size-[8px]" />
      E:\
    </button>
    <div className="mr-[4px] ml-auto flex items-center gap-[6px]">
      <ComputerIcon className="size-[9px]" />
      <SystemIcon className="size-[9px]" />
      <SoundIcon className="size-[9px]" />
      <DisplayIcon className="size-[9px]" />
      <NetPlacesIcon className="size-[9px]" />
    </div>
  </footer>
);

const App = () => {
  return (
    <div className="relative flex min-h-screen flex-col overflow-hidden bg-[#edcdb2] text-[6px] leading-[8px] text-black [font-family:'Liberation_Mono','Noto_Sans_CJK_SC',monospace]">
      {/* Remote desktop title bar */}
      <header className="flex h-[11px] shrink-0 items-start bg-linear-to-r from-[#e3cdb9] via-[#e9c4a2] to-[#e6d5c8]">
        <ComputerIcon className="mt-px size-[5px]" />
        <span className="h-[10px] w-[52px] bg-black" />
        <h1 className="flex-1 pt-px">- 远程桌面连接</h1>
        <div className="mr-[3px] flex h-[9px] text-white">
          <button aria-label="最小化" className="flex w-[15px] items-center justify-center rounded-bl-sm border border-t-0 border-[#a08e80] bg-[#dccdc2]">
            <span className="h-[3px] w-[7px] border border-[#8a8480] bg-white" />
          </button>
          <button aria-label="还原" className="flex w-[14px] items-center justify-center border-r border-b border-[#a08e80] bg-[#dccdc2]">
            <svg viewBox="0 0 7 7" className="size-[7px]">
              <path d="M2 .5h4.500V5M.5 2h4.500v4.500H.5z" fill="#fff" stroke="#5a5a6a" />
            </svg>
          </button>
          <button aria-label="关闭" className="flex w-[26px] items-center justify-center rounded-br-sm border border-t-0 border-[#9c4a3c] bg-linear-to-b from-[#e29a84] to-[#cc4a30]">
            <svg viewBox="0 0 6 5" className="h-[5px] w-[6px]">
              <path d="M.5 0l5 5M5.500 0l-5 5" stroke="#fff" strokeWidth="1.500" />
            </svg>
          </button>
        </div>
      </header>

      {/* Remote screen */}
      <div className="mr-[4px] flex flex-1 flex-col border-t border-[#55708c]">
        <main className="relative flex-1 bg-[#396da5]">
          <div className="flex w-[40px] flex-col text-white">
            {desktopIcons.map(({ label, icon: Icon }) => (
              <button key={label} className="flex h-[43px] flex-col items-center leading-[7px]">
                <Icon className="size-[18px]" />
                {label}
              </button>
            ))}
          </div>
          <ExplorerWindow />
        </main>
        <Taskbar />
      </div>
      <div className="h-[5px] shrink-0 border-b-2 border-[#9a7d68] bg-[#edcdb2]" />

      <StartMenu />
      <ControlPanelMenu />

      {/* Watermark */}
      <div className="absolute right-[7px] bottom-[3px] z-30 flex items-end gap-[5px]">
        <ShieldLogo />
        <div className="[font-family:'DejaVu_Sans','Noto_Sans_CJK_SC',sans-serif]">
          <p className="text-[22px] leading-[24px] font-black text-[#1d1f22]">群宜手游网</p>
          <p className="text-[9px] leading-[9px] text-[#3a3c40]">QUNYISHOUYOUWANG</p>
        </div>
      </div>
    </div>
  );
};

export default App;
